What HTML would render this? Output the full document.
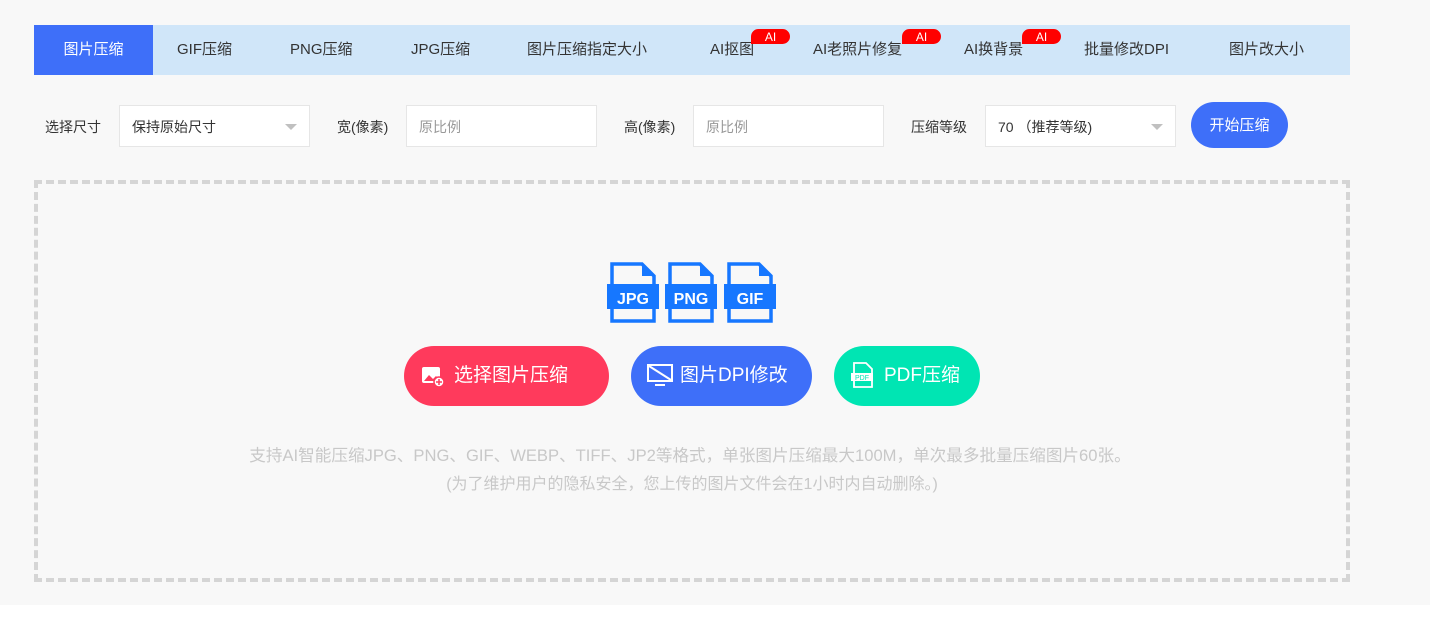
<!DOCTYPE html><html><head><meta charset="utf-8"><style>
body{margin:0;width:1430px;height:635px;background:#fff;font-family:"Liberation Sans","Noto Sans CJK SC",sans-serif;position:relative;overflow:hidden}
.bg{position:absolute;left:0;top:0;width:1430px;height:605px;background:#f8f8f8}
.tabs{position:absolute;left:34px;top:25px;width:1316px;height:50px;background:#d0e6f9}
.t{position:absolute;top:0;height:50px;line-height:50px;font-size:15px;color:#333;white-space:nowrap}
.act{left:0;width:119px;background:#3e6ff9;color:#fff;text-align:center}
.b{position:absolute;top:4px;width:39px;height:15px;background:#f00;color:#fff;font-size:12px;line-height:16px;text-align:center;border-radius:8px 8px 8px 0}
.lbl{position:absolute;top:117px;font-size:14px;color:#333}
.in{position:absolute;top:105px;height:42px;background:#fff;border:1px solid #e6e6e6;box-sizing:border-box;font-size:14px;line-height:42px;padding-left:12px;color:#333}
.ph{color:#999}
.arr{position:absolute;right:12px;top:18px;border:6px solid transparent;border-top:6px solid #c0c0c0;border-bottom:0}
.drop{position:absolute;left:34px;top:180px;width:1316px;height:402px;border:4px dashed #d5d5d5;box-sizing:border-box}
.btn{position:absolute;top:346px;height:60px;border-radius:30px;color:#fff;font-size:19px;line-height:60px;box-sizing:border-box}
.fi{position:absolute;top:262px}
</style></head><body><div class="bg"></div>
<div class="tabs">
<div class="t act">图片压缩</div>
<div class="t" style="left:143px">GIF压缩</div>
<div class="t" style="left:256px">PNG压缩</div>
<div class="t" style="left:377px">JPG压缩</div>
<div class="t" style="left:493px">图片压缩指定大小</div>
<div class="t" style="left:676px">AI抠图</div><div class="b" style="left:717px">AI</div>
<div class="t" style="left:779px">AI老照片修复</div><div class="b" style="left:868px">AI</div>
<div class="t" style="left:930px">AI换背景</div><div class="b" style="left:988px">AI</div>
<div class="t" style="left:1050px">批量修改DPI</div>
<div class="t" style="left:1195px">图片改大小</div>
</div>
<div class="lbl" style="left:45px">选择尺寸</div>
<div class="in" style="left:119px;width:191px">保持原始尺寸<span class="arr"></span></div>
<div class="lbl" style="left:337px">宽(像素)</div>
<div class="in ph" style="left:406px;width:191px">原比例</div>
<div class="lbl" style="left:624px">高(像素)</div>
<div class="in ph" style="left:693px;width:191px">原比例</div>
<div class="lbl" style="left:911px">压缩等级</div>
<div class="in" style="left:985px;width:191px">70 （推荐等级)<span class="arr"></span></div>
<div style="position:absolute;left:1191px;top:102px;width:97px;height:46px;border-radius:23px;background:#3e6ff9;color:#fff;font-size:15px;line-height:48px;text-align:center">开始压缩</div>
<div class="drop"></div>
<svg class="fi" style="left:607px" width="170" height="62" viewBox="0 0 170 62">
<g fill="none" stroke="#1677ff" stroke-width="3.5"><path d="M5 2h30l12 12v45H5z"/><path d="M63 2h30l12 12v45H63z"/><path d="M122 2h30l12 12v45h-42z"/></g>
<g fill="#1677ff"><path d="M35 2v12h12z"/><path d="M93 2v12h12z"/><path d="M152 2v12h12z"/><rect x="0" y="22" width="52" height="25"/><rect x="58" y="22" width="52" height="25"/><rect x="117" y="22" width="52" height="25"/></g>
<g fill="#fff" font-family="Liberation Sans" font-weight="bold" font-size="16" text-anchor="middle"><text x="26" y="42">JPG</text><text x="84" y="42">PNG</text><text x="143" y="42">GIF</text></g></svg>
<div class="btn" style="left:404px;width:205px;background:#ff3a5c;padding-left:50px">选择图片压缩</div>
<svg style="position:absolute;left:421px;top:365px" width="24" height="24" viewBox="0 0 24 24"><rect x="1" y="2" width="18" height="16" rx="2" fill="#fff"/><path d="M3 16l5-6 4 4 3-3 4 5z" fill="#ff3a5c"/><circle cx="18" cy="17" r="5" fill="#fff" stroke="#ff3a5c" stroke-width="1.5"/><path d="M18 14v6M15 17h6" stroke="#ff3a5c" stroke-width="1.5"/></svg>
<div class="btn" style="left:631px;width:181px;background:#3e6ff9;padding-left:49px">图片DPI修改</div>
<svg style="position:absolute;left:646px;top:363px" width="28" height="26" viewBox="0 0 28 26"><rect x="2" y="2" width="24" height="16" fill="none" stroke="#fff" stroke-width="2"/><path d="M3 3l22 14M9 22h10" stroke="#fff" stroke-width="2"/></svg>
<div class="btn" style="left:834px;width:146px;background:#00e5b3;padding-left:50px">PDF压缩</div>
<svg style="position:absolute;left:851px;top:362px" width="24" height="26" viewBox="0 0 24 26"><path d="M3 1h12l6 6v18H3z" fill="none" stroke="#fff" stroke-width="1.8"/><rect x="0" y="11" width="22" height="8" fill="#fff"/><text x="11" y="18" font-size="7" fill="#00e5b3" text-anchor="middle" font-family="Liberation Sans">PDF</text></svg>
<div style="position:absolute;left:0;width:1380px;top:442px;text-align:center;font-size:16.6px;color:#c8c8c8;white-space:nowrap">支持AI智能压缩JPG、PNG、GIF、WEBP、TIFF、JP2等格式，单张图片压缩最大100M，单次最多批量压缩图片60张。</div>
<div style="position:absolute;left:0;width:1384px;top:470px;text-align:center;font-size:16px;color:#c8c8c8;white-space:nowrap">(为了维护用户的隐私安全，您上传的图片文件会在1小时内自动删除。)</div>
</body></html>
